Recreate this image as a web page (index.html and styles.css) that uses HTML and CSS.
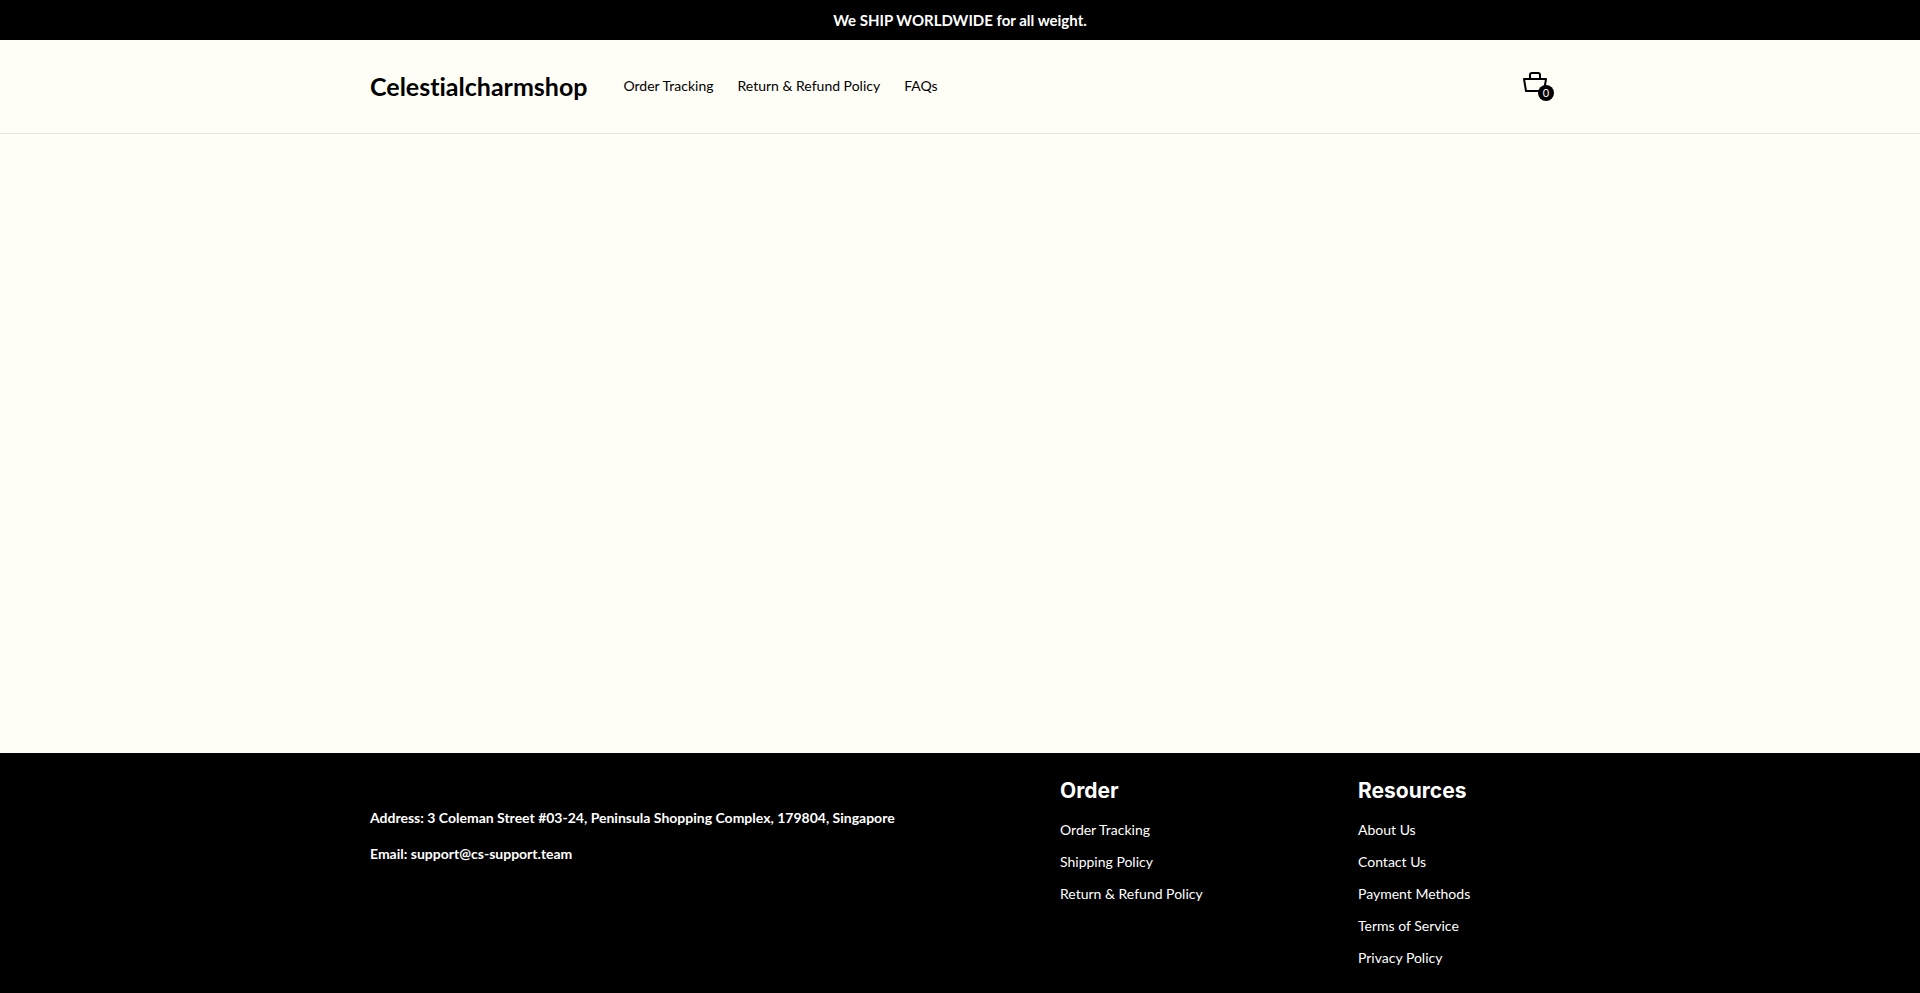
FILE: index.html
```
<!DOCTYPE html>
<html lang="en">
<head>
  <meta charset="UTF-8">
  <meta name="viewport" content="width=device-width, initial-scale=1.0">
  <title>Celestialcharmshop</title>
  <link rel="stylesheet" href="styles.css">
</head>
<body>
  <div class="announcement">We SHIP WORLDWIDE for all weight.</div>

  <header>
    <div class="container header-inner">
      <a class="logo" href="#">Celestialcharmshop</a>
      <nav>
        <a href="#tracking">Order Tracking</a>
        <a href="#refund">Return &amp; Refund Policy</a>
        <a href="#faqs">FAQs</a>
      </nav>
      <a class="cart" href="#cart" aria-label="Cart">
        <svg width="26" height="24" viewBox="0 0 26 24" fill="none" stroke="#000" stroke-width="2" stroke-linejoin="round" stroke-linecap="round">
          <path d="M2 9H24L22 21H4Z"/>
          <path d="M8 9V5Q8 3 10 3H16Q18 3 18 5V9"/>
        </svg>
        <span class="cart-count">0</span>
      </a>
    </div>
  </header>

  <main></main>

  <footer>
    <div class="container footer-inner">
      <div class="contact">
        <p>Address: 3 Coleman Street #03-24, Peninsula Shopping Complex, 179804, Singapore</p>
        <p>Email: support@cs-support.team</p>
      </div>
      <div class="footer-col">
        <h2>Order</h2>
        <ul>
          <li><a href="#tracking">Order Tracking</a></li>
          <li><a href="#shipping">Shipping Policy</a></li>
          <li><a href="#refund">Return &amp; Refund Policy</a></li>
        </ul>
      </div>
      <div class="footer-col">
        <h2>Resources</h2>
        <ul>
          <li><a href="#about">About Us</a></li>
          <li><a href="#contact">Contact Us</a></li>
          <li><a href="#payment">Payment Methods</a></li>
          <li><a href="#terms">Terms of Service</a></li>
          <li><a href="#privacy">Privacy Policy</a></li>
        </ul>
      </div>
    </div>
  </footer>
</body>
</html>
```
FILE: styles.css
```
* {
  box-sizing: border-box;
}
body {
  display: flex;
  flex-direction: column;
  min-height: 100vh;
  margin: 0;
  background-color: #fffef6;
  color: #000;
  font-family: Lato, sans-serif;
  font-size: 14px;
  font-variant-ligatures: none;
  line-height: 20px;
}
a {
  color: inherit;
  text-decoration: none;
}
.container {
  width: 100%;
  max-width: 1200px;
  margin: 0 auto;
  padding: 0 10px;
}
.announcement {
  padding: 10px;
  background-color: #000;
  color: #fff;
  font-size: 15px;
  font-weight: bold;
  text-align: center;
}
header {
  border-bottom: 1px solid #e6e6e2;
}
.header-inner {
  display: flex;
  align-items: center;
  flex-wrap: wrap;
  gap: 36px;
  padding-top: 26px;
  padding-bottom: 27px;
}
.logo {
  font-size: 25px;
  font-weight: bold;
  line-height: 40px;
}
nav {
  display: flex;
  flex-wrap: wrap;
  gap: 24px;
}
.cart {
  position: relative;
  display: flex;
  margin-left: auto;
  margin-bottom: 8px;
  padding: 4px 2px;
}
.cart-count {
  position: absolute;
  right: -4px;
  bottom: -3px;
  width: 16px;
  height: 16px;
  border-radius: 50%;
  background-color: #000;
  color: #fff;
  font-size: 11px;
  line-height: 16px;
  text-align: center;
}
main {
  flex: 1;
}
footer {
  padding: 24px 0 19px;
  background-color: #000;
  color: #fff;
}
.footer-inner {
  display: grid;
  grid-template-columns: 1fr 268px 192px;
  gap: 30px;
}
.contact {
  padding-top: 31px;
  font-weight: bold;
}
.contact p {
  margin: 0 0 16px;
}
.footer-col h2 {
  margin: 0 0 9px;
  font-family: Inter, sans-serif;
  font-size: 21px;
  line-height: 28px;
}
.footer-col ul {
  margin: 0;
  padding: 0;
  list-style: none;
}
.footer-col li {
  padding: 6px 0;
}

@media (max-width: 900px) {
  .footer-inner {
    grid-template-columns: 1fr;
  }
}
```
